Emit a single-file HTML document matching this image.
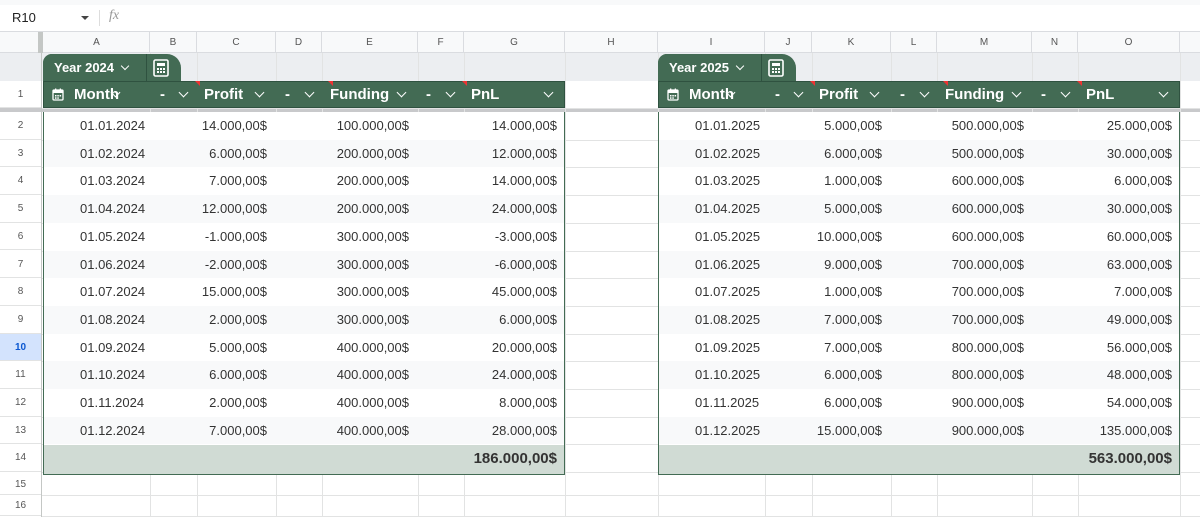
<!DOCTYPE html>
<html><head><meta charset="utf-8"><style>
body{margin:0;width:1200px;height:517px;overflow:hidden;background:#fff;font-family:"Liberation Sans",Arial,sans-serif;position:relative;color:#333}
div{position:absolute;box-sizing:border-box}
.t{white-space:nowrap}
.ch{font-size:10px;color:#555;text-align:center;top:32px;height:21px;line-height:21px;border-right:1px solid #dadce0}
.rh{left:0;width:41px;font-size:10px;color:#555;text-align:center;border-bottom:1px solid #e2e3e3}
.hl{height:1px;background:#e2e3e3}
.vl{width:1px;background:#e2e3e3}
.hdr{background:#436b54;color:#fff;font-weight:bold;font-size:15px}
.chev{width:7px;height:7px;border-right:1.6px solid #fff;border-bottom:1.6px solid #fff;transform:rotate(45deg)}
.d{font-size:13px;color:#333;height:27px;line-height:28px}
</style></head><body>
<div style="left:0;top:0;width:1200px;height:5px;background:#f8f9fa"></div>
<div class="t" style="left:12px;top:10px;font-size:13px;color:#222">R10</div>
<div style="left:81px;top:16px;border-left:4px solid transparent;border-right:4px solid transparent;border-top:4px solid #444"></div>
<div style="left:99px;top:10px;width:1px;height:16px;background:#ddd"></div>
<div class="t" style="left:109px;top:8px;font-size:14px;font-style:italic;color:#999;font-family:'Liberation Serif',serif">fx</div>
<div style="left:0;top:31px;width:1200px;height:1px;background:#dadce0"></div>
<div style="left:0;top:32px;width:1200px;height:21px;background:#f8f9fa;border-bottom:1px solid #dadce0"></div>
<div style="left:38px;top:32px;width:5px;height:21px;background:#c4c7c5"></div>
<div id="cols"></div>
<div style="left:0;top:53px;width:1200px;height:28px;background:#eceef1"></div>
<div style="left:0;top:108px;width:1200px;height:4px;background:#c8c9cb"></div>
<div style="left:41px;top:53px;width:1px;height:464px;background:#c4c7c5"></div>
<div id="grid"></div>
<script>
var cols=[[44,150,'A'],[150,197,'B'],[197,276,'C'],[276,322,'D'],[322,418,'E'],[418,464,'F'],[464,565,'G'],[565,658,'H'],[658,765,'I'],[765,812,'J'],[812,891,'K'],[891,937,'L'],[937,1032,'M'],[1032,1078,'N'],[1078,1180,'O'],[1180,1230,'']];
var h='';
cols.forEach(function(c){h+='<div class="ch" style="left:'+c[0]+'px;width:'+(c[1]-c[0])+'px">'+c[2]+'</div>';});
// row headers
var rows=[[81,108,'1']];
for(var i=0;i<13;i++){var t=112+i*27.7;rows.push([t,t+27.7,String(i+2)]);}
rows.push([474,495,'15']);rows.push([495,516,'16']);
rows.forEach(function(r){var b=r[2]=='10';h+='<div class="rh" style="top:'+r[0]+'px;height:'+(r[1]-r[0])+'px;line-height:'+(r[1]-r[0])+'px;'+(b?'background:#d3e3fd;color:#0b57d0;font-weight:bold':'')+'">'+r[2]+'</div>';});
// grid lines outside tables
rows.forEach(function(r){h+='<div class="hl" style="left:42px;width:1158px;top:'+Math.round(r[1])+'px"></div>';});
cols.forEach(function(c){h+='<div class="vl" style="left:'+c[1]+'px;top:53px;height:464px"></div>';});
function table(o,title,d){
 // tab
 h+='<div style="left:'+(43+o)+'px;top:54px;width:138px;height:28px;background:#436b54;border-radius:9px 14px 0 0"></div>';
 h+='<div style="left:'+(43+o)+'px;top:54px;width:104px;height:27px;background:#436b54;border-radius:9px 0 0 0;border-right:1px solid #2f5240"></div>';
 h+='<div class="t" style="left:'+(54+o)+'px;top:60px;color:#fff;font-size:13px;font-weight:bold">'+title+'</div>';
 h+='<div class="chev" style="left:'+(122+o)+'px;top:63px;width:6px;height:6px"></div>';
 h+='<svg style="position:absolute;left:'+(153+o)+'px;top:59px" width="16" height="18" viewBox="0 0 16 18"><rect x="1" y="1" width="14" height="16" rx="1.5" fill="none" stroke="#fff" stroke-width="1.6"/><rect x="4" y="4" width="8" height="3" fill="#fff"/><g fill="#fff"><rect x="4" y="9" width="2" height="2"/><rect x="7" y="9" width="2" height="2"/><rect x="10" y="9" width="2" height="2"/><rect x="4" y="12" width="2" height="2"/><rect x="7" y="12" width="2" height="2"/><rect x="10" y="12" width="2" height="2"/></g></svg>';
 // header row
 h+='<div class="hdr" style="left:'+(43+o)+'px;top:81px;width:522px;height:27px;border:1px solid #2f5240"></div>';
 h+='<svg style="position:absolute;left:'+(52+o)+'px;top:88px" width="12" height="13" viewBox="0 0 12 13"><rect x="1" y="2" width="10" height="10" rx="1" fill="none" stroke="#fff" stroke-width="1.3"/><rect x="1" y="2" width="10" height="3" fill="#fff"/><g fill="#fff"><rect x="3" y="7" width="1.5" height="1.5"/><rect x="5.3" y="7" width="1.5" height="1.5"/><rect x="7.6" y="7" width="1.5" height="1.5"/><rect x="3" y="9.3" width="1.5" height="1.5"/><rect x="5.3" y="9.3" width="1.5" height="1.5"/></g><rect x="3" y="0.5" width="1.3" height="2.5" fill="#fff"/><rect x="7.7" y="0.5" width="1.3" height="2.5" fill="#fff"/></svg>';
 [[74,'Month'],[160,'-'],[204,'Profit'],[285,'-'],[330,'Funding'],[426,'-'],[471,'PnL']].forEach(function(x){h+='<div class="t hdr" style="background:none;left:'+(x[0]+o)+'px;top:86px">'+x[1]+'</div>';});
 [112,180,256,306,398,447,545].forEach(function(x){h+='<div class="chev" style="left:'+(x+o)+'px;top:89px"></div>';});
 [195,328,462].forEach(function(x){h+='<div style="left:'+(x+o)+'px;top:81px;border-left:5px solid transparent;border-top:5px solid #e33"></div>';});
 // body
 h+='<div style="left:'+(43+o)+'px;top:112px;width:522px;height:363px;border:1px solid #436b54;border-top:none;background:#fff"></div>';
 d.forEach(function(r,i){var t=112+i*27.7;
  if(i%2==1)h+='<div style="left:'+(44+o)+'px;top:'+t+'px;width:520px;height:27.7px;background:#f8f9fa"></div>';
  h+='<div class="t d" style="left:'+(80+o)+'px;top:'+t+'px">'+r[0]+'</div>';
  h+='<div class="t d" style="right:'+(1200-267-o)+'px;top:'+t+'px">'+r[1]+'</div>';
  h+='<div class="t d" style="right:'+(1200-409-o)+'px;top:'+t+'px">'+r[2]+'</div>';
  h+='<div class="t d" style="right:'+(1200-557-o)+'px;top:'+t+'px">'+r[3]+'</div>';
 });
 h+='<div style="left:'+(44+o)+'px;top:445px;width:520px;height:29px;background:#d0dbd4"></div>';
 h+='<div class="t" style="right:'+(1200-557-o)+'px;top:450px;font-size:15px;font-weight:bold;color:#333">'+title2[o]+'</div>';
}
var title2={0:'186.000,00$',615:'563.000,00$'};
var a=[['01.01.2024','14.000,00$','100.000,00$','14.000,00$'],['01.02.2024','6.000,00$','200.000,00$','12.000,00$'],['01.03.2024','7.000,00$','200.000,00$','14.000,00$'],['01.04.2024','12.000,00$','200.000,00$','24.000,00$'],['01.05.2024','-1.000,00$','300.000,00$','-3.000,00$'],['01.06.2024','-2.000,00$','300.000,00$','-6.000,00$'],['01.07.2024','15.000,00$','300.000,00$','45.000,00$'],['01.08.2024','2.000,00$','300.000,00$','6.000,00$'],['01.09.2024','5.000,00$','400.000,00$','20.000,00$'],['01.10.2024','6.000,00$','400.000,00$','24.000,00$'],['01.11.2024','2.000,00$','400.000,00$','8.000,00$'],['01.12.2024','7.000,00$','400.000,00$','28.000,00$']];
var b=[['01.01.2025','5.000,00$','500.000,00$','25.000,00$'],['01.02.2025','6.000,00$','500.000,00$','30.000,00$'],['01.03.2025','1.000,00$','600.000,00$','6.000,00$'],['01.04.2025','5.000,00$','600.000,00$','30.000,00$'],['01.05.2025','10.000,00$','600.000,00$','60.000,00$'],['01.06.2025','9.000,00$','700.000,00$','63.000,00$'],['01.07.2025','1.000,00$','700.000,00$','7.000,00$'],['01.08.2025','7.000,00$','700.000,00$','49.000,00$'],['01.09.2025','7.000,00$','800.000,00$','56.000,00$'],['01.10.2025','6.000,00$','800.000,00$','48.000,00$'],['01.11.2025','6.000,00$','900.000,00$','54.000,00$'],['01.12.2025','15.000,00$','900.000,00$','135.000,00$']];
table(0,'Year 2024',a);table(615,'Year 2025',b);
document.getElementById('grid').outerHTML=h;
</script>
</body></html>
